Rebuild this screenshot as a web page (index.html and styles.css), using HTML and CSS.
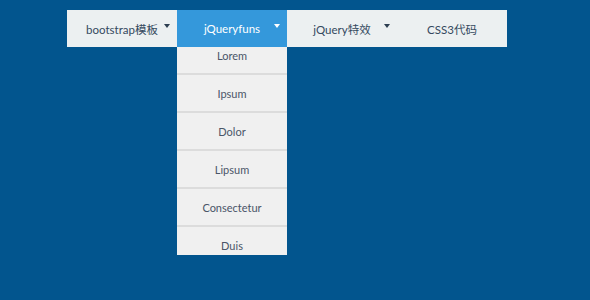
FILE: index.html
```html
<!DOCTYPE html>
<html>
<head>
<meta charset="utf-8">
<link rel="stylesheet" href="styles.css">
</head>
<body>
<div class="page">
  <ul class="nav">
    <li class="item"><span>bootstrap模板</span><i class="caret"></i></li>
    <li class="item active"><span>jQueryfuns</span><i class="caret"></i>
      <div class="drop">
        <ul class="menu">
          <li>Lorem</li>
          <li>Ipsum</li>
          <li>Dolor</li>
          <li>Lipsum</li>
          <li>Consectetur</li>
          <li>Duis</li>
        </ul>
      </div>
    </li>
    <li class="item"><span>jQuery特效</span><i class="caret"></i></li>
    <li class="item"><span>CSS3代码</span></li>
  </ul>
</div>
</body>
</html>
```
FILE: styles.css
```css
html, body {
  margin: 0;
  padding: 0;
  background: #02558e;
  height: 100%;
}
.page {
  padding: 10px 0 0 67px;
  font-family: Lato, "Noto Sans CJK SC", sans-serif;
}
.nav {
  list-style: none;
  margin: 0;
  padding: 0;
  display: flex;
}
.item {
  position: relative;
  width: 110px;
  height: 37px;
  background: #ecf0f1;
  color: #34495e;
  font-size: 11.5px;
  display: flex;
  align-items: center;
  justify-content: center;
}
.item.active {
  background: #3498db;
  color: #fff;
}
.caret {
  position: absolute;
  right: 7px;
  top: 14px;
  width: 0;
  height: 0;
  border-left: 3px solid transparent;
  border-right: 3px solid transparent;
  border-top: 4px solid #2c3e50;
}
.active .caret {
  border-top-color: #fff;
}
.drop {
  position: absolute;
  left: 0;
  top: 37px;
  width: 110px;
  height: 208px;
  overflow: hidden;
}
.menu {
  list-style: none;
  margin: -10px 0 0 0;
  padding: 0;
}
.menu li {
  height: 36px;
  border-bottom: 2px solid #dcdcdc;
  background: #f0f0f0;
  color: #4a5568;
  font-size: 11px;
  display: flex;
  align-items: center;
  justify-content: center;
}
```
